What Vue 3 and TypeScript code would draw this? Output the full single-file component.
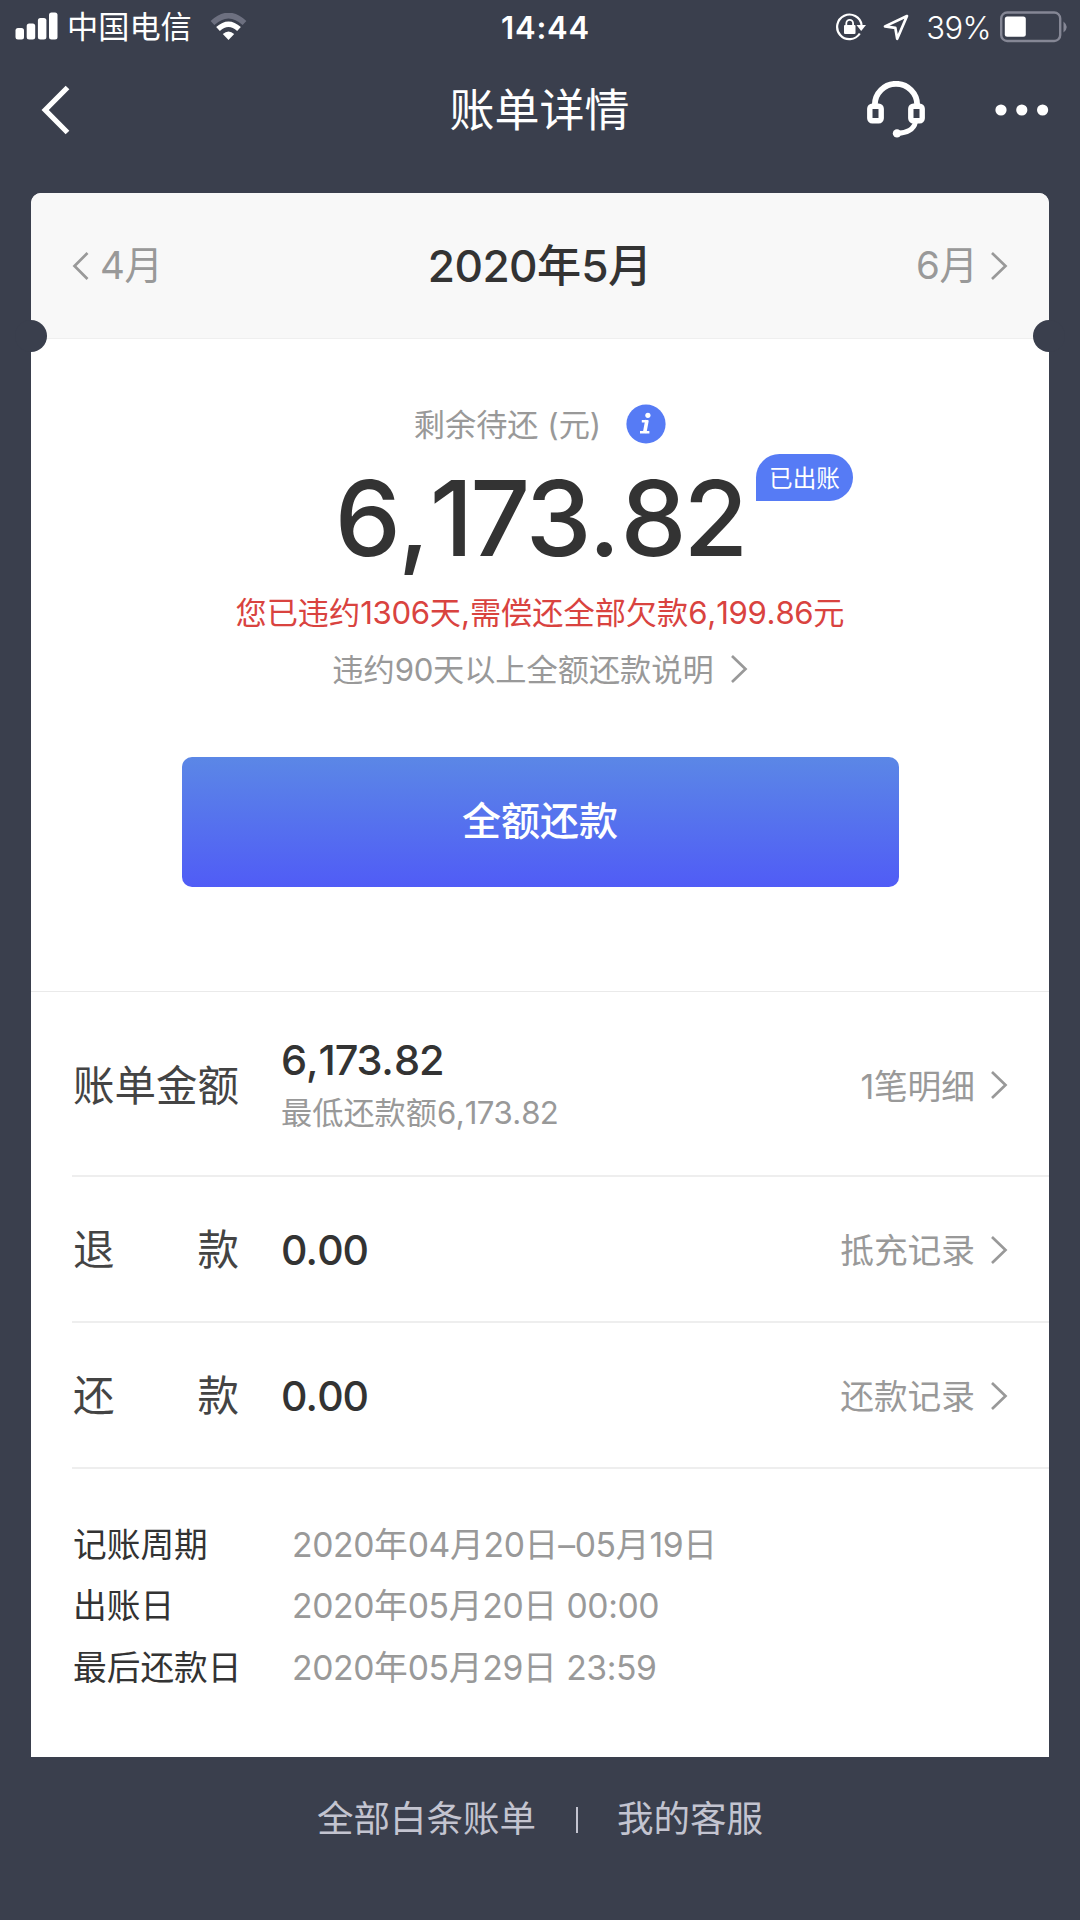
<script setup lang="ts">
import { h, type FunctionalComponent } from 'vue'

interface BillRow {
  label: string
  amount: string
  note?: string
  link: string
}

interface InfoRow {
  label: string
  value: string
}

// Splits mixed text so that digits and separators can be tracked apart from Chinese characters.
const MixedText: FunctionalComponent<{ text: string }> = (props) =>
  props.text
    .split(/([\d:–]+|[.,])/)
    .filter((part) => part.length > 0)
    .map((part) => {
      const kind = /^[.,]$/.test(part) ? 'sep' : /^[\d:–]+$/.test(part) ? 'num' : 'han'
      return h('span', { class: kind }, part)
    })
MixedText.props = ['text']

const Chevron: FunctionalComponent<{ flip?: boolean }> = (props) =>
  h('svg', { class: 'chevron', width: 18, height: 30, viewBox: '0 0 18 30' }, [
    h('path', {
      d: props.flip ? 'M15.5 2 L2.5 15 L15.5 28' : 'M2 2 L15.5 15 L2 28',
      fill: 'none',
      stroke: '#999',
      'stroke-width': 2.7,
    }),
  ])
Chevron.props = ['flip']

const rows: BillRow[] = [
  { label: '账单金额', amount: '6,173.82', note: '最低还款额6,173.82', link: '1笔明细' },
  { label: '退款', amount: '0.00', link: '抵充记录' },
  { label: '还款', amount: '0.00', link: '还款记录' },
]

const infos: InfoRow[] = [
  { label: '记账周期', value: '2020年04月20日–05月19日' },
  { label: '出账日', value: '2020年05月20日 00:00' },
  { label: '最后还款日', value: '2020年05月29日 23:59' },
]
</script>

<template>
  <div class="screen">
    <header class="status">
      <div class="status-left">
        <svg class="signal" width="44" height="30" viewBox="0 0 44 30">
          <rect x="0.5" y="16" width="8.5" height="11.5" rx="2.5" />
          <rect x="11.7" y="11.5" width="8.5" height="16" rx="2.5" />
          <rect x="22.9" y="6" width="8.5" height="21.5" rx="2.5" />
          <rect x="34" y="0.5" width="8.5" height="27" rx="2.5" />
        </svg>
        <span class="carrier">中国电信</span>
        <svg class="wifi" width="37" height="28" viewBox="0 0 37 28">
          <path d="M2.5 10 Q18.5 -5 34.5 10" fill="none" stroke="#6d7080" stroke-width="5.5" />
          <path d="M8 16 Q18.5 6.5 29 16" fill="none" stroke="#fff" stroke-width="5.5" />
          <path d="M12.8 21 Q18.5 16 24.2 21 L18.5 27 Z" fill="#fff" />
        </svg>
      </div>
      <span class="clock">14:44</span>
      <div class="status-right">
        <svg class="lock" width="30" height="28" viewBox="0 0 30 28">
          <path d="M25.6 12 A12.3 12.3 0 1 0 23.8 20.5" fill="none" stroke="#fff" stroke-width="2.2" />
          <path d="M20.5 12 H30 L25.2 18 Z" fill="#fff" />
          <rect x="8" y="12" width="11.5" height="9" rx="1" fill="#fff" />
          <path d="M10.3 13 V10.5 A3.4 3.6 0 0 1 17.1 10.5 V13" fill="none" stroke="#fff" stroke-width="1.8" />
        </svg>
        <svg class="arrow" width="26" height="27" viewBox="0 0 26 27">
          <path d="M24 2 L2 12.4 L12.3 13.8 L14.2 24.8 Z" fill="none" stroke="#fff" stroke-width="2.7" stroke-linejoin="round" />
        </svg>
        <span class="percent">39%</span>
        <svg class="battery" width="68" height="32" viewBox="0 0 68 32">
          <rect x="1.2" y="1.5" width="59" height="28.5" rx="6" fill="none" stroke="#858795" stroke-width="2.4" />
          <rect x="4.8" y="5.5" width="21" height="20.3" rx="2.5" fill="#fff" />
          <path d="M63.5 10.5 Q70 16 63.5 21.5 Z" fill="#858795" />
        </svg>
      </div>
    </header>

    <nav class="navbar">
      <svg class="back" width="30" height="50" viewBox="0 0 30 50">
        <path d="M26.5 2.5 L4.2 25 L26.5 47.5" fill="none" stroke="#fff" stroke-width="5.2" />
      </svg>
      <h1 class="title">账单详情</h1>
      <div class="nav-actions">
        <svg class="headset" width="58" height="58" viewBox="0 0 58 58" fill="none" stroke="#fff">
          <path d="M7.8 25 V24 A21.2 21.2 0 0 1 50.2 24 V25" stroke-width="5.8" />
          <rect x="2.8" y="25.2" width="11.4" height="14.6" rx="2.5" stroke-width="5.4" />
          <rect x="43.8" y="25.2" width="11.4" height="14.6" rx="2.5" stroke-width="5.4" />
          <path d="M48.4 41 C47 48.5 39.5 52.2 31 52.2" stroke-width="5" />
          <circle cx="30" cy="52.4" r="4.2" fill="#fff" stroke="none" />
        </svg>
        <svg class="more" width="54" height="12" viewBox="0 0 54 12" fill="#fff">
          <circle cx="6" cy="6" r="5.6" />
          <circle cx="26.8" cy="6" r="5.6" />
          <circle cx="47.6" cy="6" r="5.6" />
        </svg>
      </div>
    </nav>

    <main class="card">
      <section class="months">
        <a class="month prev"><Chevron :flip="true" /><span><MixedText text="4月" /></span></a>
        <strong class="current"><MixedText text="2020年5月" /></strong>
        <a class="month next"><span><MixedText text="6月" /></span><Chevron /></a>
        <i class="notch notch-left"></i>
        <i class="notch notch-right"></i>
      </section>

      <section class="summary">
        <div class="remain">
          <span>剩余待还 (元)</span>
          <svg class="info" width="40" height="40" viewBox="0 0 40 40">
            <circle cx="20" cy="20" r="19.6" fill="#567bf5" />
            <circle cx="21.9" cy="11.3" r="2.6" fill="#fff" />
            <path d="M15.8 17.2 H21.9 M14 28.2 H23.4" fill="none" stroke="#fff" stroke-width="2.4" />
            <path d="M21 16.2 L18.6 29" stroke="#fff" stroke-width="3.6" />
          </svg>
        </div>
        <div class="total">
          <span class="total-num"><MixedText text="6,173.82" /></span>
          <span class="badge">已出账</span>
        </div>
        <p class="warn"><MixedText text="您已违约1306天,需偿还全部欠款6,199.86元" /></p>
        <a class="explain"><span><MixedText text="违约90天以上全额还款说明" /></span><Chevron /></a>
        <button class="pay">全额还款</button>
      </section>

      <section class="rows">
        <div v-for="row in rows" :key="row.label" class="row" :class="{ tall: row.note }">
          <div class="label"><span v-for="c in row.label" :key="c">{{ c }}</span></div>
          <div class="amounts">
            <span class="amount"><MixedText :text="row.amount" /></span>
            <span v-if="row.note" class="note"><MixedText :text="row.note" /></span>
          </div>
          <a class="link"><span><MixedText :text="row.link" /></span><Chevron /></a>
        </div>
      </section>

      <dl class="infos">
        <div v-for="item in infos" :key="item.label" class="info-row">
          <dt>{{ item.label }}</dt>
          <dd><MixedText :text="item.value" /></dd>
        </div>
      </dl>
    </main>

    <footer class="footer">
      <a>全部白条账单</a>
      <i class="bar"></i>
      <a>我的客服</a>
    </footer>
  </div>
</template>

<style>
body {
  background: #3a3f4d;
}
.chevron {
  display: block;
  flex: none;
  margin-top: 1px;
}
.han {
  white-space: pre;
}
.num {
  letter-spacing: -0.012em;
}
</style>

<style scoped>
.screen {
  width: 1080px;
  height: 1920px;
  overflow: hidden;
  background: #3a3f4d;
  font-family: Inter, "Noto Sans CJK SC", sans-serif;
  color: #333;
  display: flex;
  flex-direction: column;
}
.total-num :deep(.num) {
  letter-spacing: -0.028em;
}
.amount :deep(.num) {
  letter-spacing: -0.028em;
}
.note :deep(.num) {
  letter-spacing: -0.018em;
}
svg {
  display: block;
  flex: none;
}
.status {
  height: 54px;
  display: grid;
  grid-template-columns: 1fr auto 1fr;
  align-items: center;
  color: #fff;
  padding: 0 12px 0 15px;
  box-sizing: border-box;
}
.status-left,
.status-right {
  display: flex;
  align-items: center;
}
.status-right {
  justify-content: flex-end;
}
.signal {
  fill: #fff;
}
.carrier {
  font-size: 31.2px;
  line-height: 40px;
  margin-left: 8px;
}
.wifi {
  margin-left: 18px;
}
.clock {
  font-size: 31px;
  line-height: 40px;
  padding-left: 8px;
  padding-top: 1px;
  font-weight: 600;
  letter-spacing: 0.8px;
}
.arrow {
  margin-left: 17px;
}
.percent {
  font-size: 31px;
  line-height: 40px;
  padding-top: 1px;
  font-weight: 300;
  margin: 0 9px 0 17px;
  letter-spacing: -0.6px;
}
.navbar {
  height: 139px;
  box-sizing: border-box;
  padding: 0 31px 28px 30px;
  display: grid;
  grid-template-columns: 1fr auto 1fr;
  align-items: center;
}
.back {
  margin-left: 11px;
}
.title {
  margin: 0;
  padding-top: 3px;
  font-size: 45px;
  line-height: 60px;
  font-weight: 400;
  color: #fff;
}
.nav-actions {
  display: flex;
  align-items: center;
  justify-content: flex-end;
  gap: 70px;
}
.card {
  width: 1018px;
  height: 1564px;
  margin-left: 31px;
  background: #fff;
  border-radius: 10px 10px 0 0;
  display: flex;
  flex-direction: column;
}
.months {
  position: relative;
  height: 146px;
  box-sizing: border-box;
  border-bottom: 1px solid #efefef;
  background: #f8f8f8;
  border-radius: 10px 10px 0 0;
  padding: 0 41px;
  display: grid;
  grid-template-columns: 1fr auto 1fr;
  align-items: center;
}
.month {
  display: flex;
  align-items: center;
  color: #999;
  font-size: 38.5px;
  line-height: 50px;
}
.month > span {
  padding-bottom: 2px;
}
.prev {
  gap: 10px;
}
.next {
  justify-content: flex-end;
  gap: 12px;
}
.current {
  font-size: 44.2px;
  line-height: 60px;
  font-weight: 500;
}
.notch {
  position: absolute;
  top: 127px;
  width: 32px;
  height: 32px;
  border-radius: 50%;
  background: #3a3f4d;
}
.notch-left {
  left: -16px;
}
.notch-right {
  right: -16px;
}
.summary {
  height: 653px;
  box-sizing: border-box;
  border-bottom: 1px solid #eaeaea;
  padding-top: 64px;
  display: flex;
  flex-direction: column;
  align-items: center;
}
.remain {
  display: flex;
  align-items: center;
  gap: 25px;
  height: 42px;
  font-size: 31.2px;
  color: #999;
}
.remain > span {
  padding-bottom: 3px;
}
.total {
  position: relative;
  width: 418px;
  height: 141px;
  display: flex;
  justify-content: center;
  align-items: flex-start;
}
.total-num {
  font-size: 105px;
  line-height: 146px;
  font-weight: 500;
  white-space: nowrap;
}
.badge {
  position: absolute;
  left: 425px;
  top: 9px;
  width: 97px;
  height: 47px;
  box-sizing: border-box;
  padding-top: 1px;
  border-radius: 24px 24px 24px 0;
  background: #567bf5;
  color: #fff;
  font-size: 23.6px;
  line-height: 47px;
  text-align: center;
}
.warn {
  margin: 0;
  height: 55px;
  font-size: 31.2px;
  line-height: 55px;
  color: #d9433f;
  white-space: nowrap;
}
.explain {
  height: 54px;
  display: flex;
  align-items: center;
  gap: 16px;
  font-size: 31.2px;
  color: #999;
}
.explain > span {
  padding-bottom: 1px;
}
.pay {
  margin-top: 62px;
  width: 717px;
  height: 130px;
  padding: 0 0 3px;
  border: 0;
  border-radius: 10px;
  background: linear-gradient(#5b87e6, #505cf6);
  color: #fff;
  font: 500 39px/50px Inter, "Noto Sans CJK SC", sans-serif;
}
.row {
  height: 146px;
  box-sizing: border-box;
  margin-left: 41px;
  padding-right: 41px;
  border-bottom: 2px solid #eee;
  display: flex;
  align-items: center;
}
.row.tall {
  height: 185px;
  padding-top: 2px;
}
.label {
  width: 166px;
  margin-left: 1px;
  padding-top: 2px;
  display: flex;
  justify-content: space-between;
  font-size: 41.5px;
  line-height: 56px;
  color: #444;
}
.amounts {
  margin-left: 42px;
  display: flex;
  flex-direction: column;
}
.amount {
  font-size: 41.5px;
  line-height: 56px;
  font-weight: 500;
}
.row:not(.tall) .amount {
  font-size: 41px;
  padding-top: 1px;
}
.row:not(.tall) .amount :deep(.sep) {
  margin: 0 -0.02em;
}
.note {
  font-size: 31.2px;
  line-height: 50px;
  color: #999;
}
.link {
  margin-left: auto;
  display: flex;
  align-items: center;
  gap: 15px;
  font-size: 33.7px;
  color: #999;
}
.link > span {
  padding-bottom: 1px;
}
.infos {
  margin: 0;
  padding: 45px 0 0 42px;
}
.info-row {
  display: flex;
  height: 61.3px;
  line-height: 61.3px;
  font-size: 33.7px;
}
.info-row dt {
  width: 219px;
}
.info-row dd {
  margin: 0;
  color: #999;
}
.footer {
  height: 118px;
  display: flex;
  justify-content: center;
  align-items: center;
  color: #c3c4d0;
  font-size: 36.5px;
}
.bar {
  width: 2px;
  height: 26px;
  margin: 7px 39px 0 40px;
  background: #c3c4d0;
}
</style>
